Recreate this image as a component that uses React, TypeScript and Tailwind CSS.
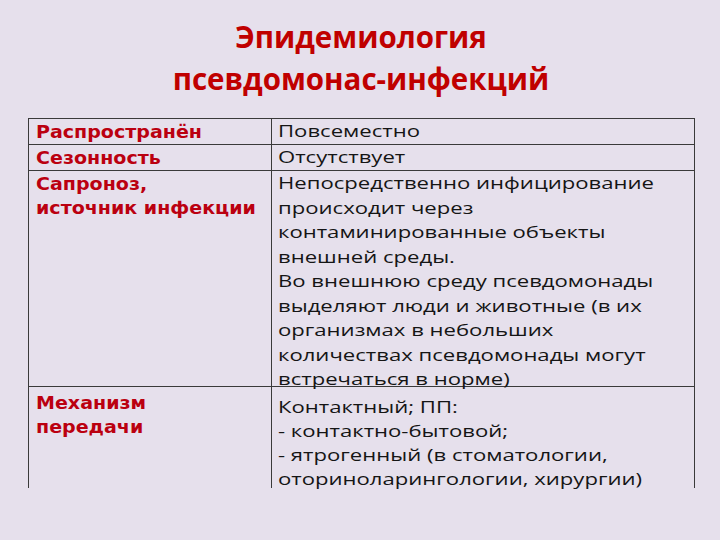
import React from "react";

const L = "font-['DejaVu_Sans',sans-serif] font-bold text-[17px] leading-[24px] text-[#bb0010]";
const R = "font-['Open_Sans',sans-serif] text-[17px] text-[#151515]";
const B = "border-[#3a3a3a]";

function LT({ children }: { children: React.ReactNode }) {
  return <div className="w-max origin-left scale-x-[1.12]">{children}</div>;
}
function RT({ children }: { children: React.ReactNode }) {
  return <div className="w-max origin-left scale-x-[1.3]">{children}</div>;
}

export default function App() {
  return (
    <div className="w-[720px] h-[540px] bg-[#e6e0ec] overflow-hidden flex flex-col items-center">
      <div className="mt-[16px] ml-[2px] text-center font-['Open_Sans',sans-serif] font-bold text-[29.5px] leading-[42px] text-[#c00000]">
        <div>Эпидемиология</div>
        <div>псевдомонас-инфекций</div>
      </div>
      <div className={`mt-[18px] w-[667px] ml-[3px] border-t border-l border-r ${B} grid grid-cols-[243px_1fr]`}>
        <div className={`h-[26px] border-r border-b ${B} pl-[7px] pt-[1px] ${L}`}><LT>Распространён</LT></div>
        <div className={`h-[26px] border-b ${B} pl-[6px] leading-[24px] ${R}`}><RT>Повсеместно</RT></div>
        <div className={`h-[26px] border-r border-b ${B} pl-[7px] pt-[1px] ${L}`}><LT>Сезонность</LT></div>
        <div className={`h-[26px] border-b ${B} pl-[6px] leading-[24px] ${R}`}><RT>Отсутствует</RT></div>
        <div className={`h-[216px] border-r border-b ${B} pl-[7px] pt-[1px] ${L}`}>
          <LT>Сапроноз,<br />источник инфекции</LT>
        </div>
        <div className={`h-[216px] border-b ${B} pl-[6px] leading-[24.5px] ${R}`}>
          <RT>
            Непосредственно инфицирование<br />
            происходит через<br />
            контаминированные объекты<br />
            внешней среды.<br />
            Во внешнюю среду псевдомонады<br />
            выделяют люди и животные (в их<br />
            организмах в небольших<br />
            количествах псевдомонады могут<br />
            встречаться в норме)
          </RT>
        </div>
        <div className={`border-r ${B} pl-[7px] pt-[4px] h-[101px] ${L}`}>
          <LT>Механизм<br />передачи</LT>
        </div>
        <div className={`h-[101px] pl-[6px] pt-[8px] leading-[24px] ${R}`}>
          <RT>
            Контактный; ПП:<br />
            - контактно-бытовой;<br />
            - ятрогенный (в стоматологии,<br />
            оториноларингологии, хирургии)
          </RT>
        </div>
      </div>
    </div>
  );
}
